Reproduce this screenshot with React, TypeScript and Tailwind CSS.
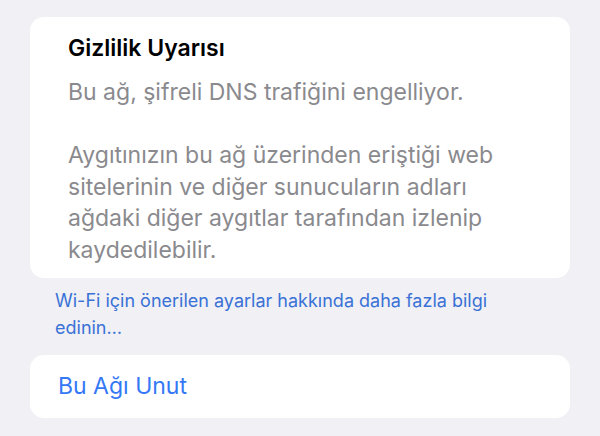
import React from 'react';

export default function App() {
  return (
    <div className="w-[600px] h-[436px] overflow-hidden bg-[#f0f0f5] px-[30px] pt-[17px] font-['Inter','Noto_Sans',sans-serif]">
      {/* Privacy warning card */}
      <div className="bg-white rounded-[14px] pl-[38px] pr-4 pt-[17px] pb-[12px]">
        <h2 className="text-[23px] leading-[28px] font-semibold text-black">
          Gizlilik Uyarısı
        </h2>
        <div className="mt-[15px] text-[23px] leading-[31.5px] text-[#8a8a8e]">
          <p>Bu ağ, şifreli DNS trafiğini engelliyor.</p>
          <p className="mt-[31.5px]">
            Aygıtınızın bu ağ üzerinden eriştiği web
            <br />
            sitelerinin ve diğer sunucuların adları
            <br />
            ağdaki diğer aygıtlar tarafından izlenip
            <br />
            kaydedilebilir.
          </p>
        </div>
      </div>

      {/* Footer link */}
      <p className="mt-[9px] pl-[25px] pr-10 text-[18px] leading-[27px] text-[#3a72d6]">
        Wi-Fi için önerilen ayarlar hakkında daha fazla bilgi edinin…
      </p>

      {/* Forget network */}
      <div className="mt-[14px] bg-white rounded-[14px] h-[63px] flex items-center pl-[28px]">
        <span className="text-[23px] text-[#3478f6]">Bu Ağı Unut</span>
      </div>
    </div>
  );
}
